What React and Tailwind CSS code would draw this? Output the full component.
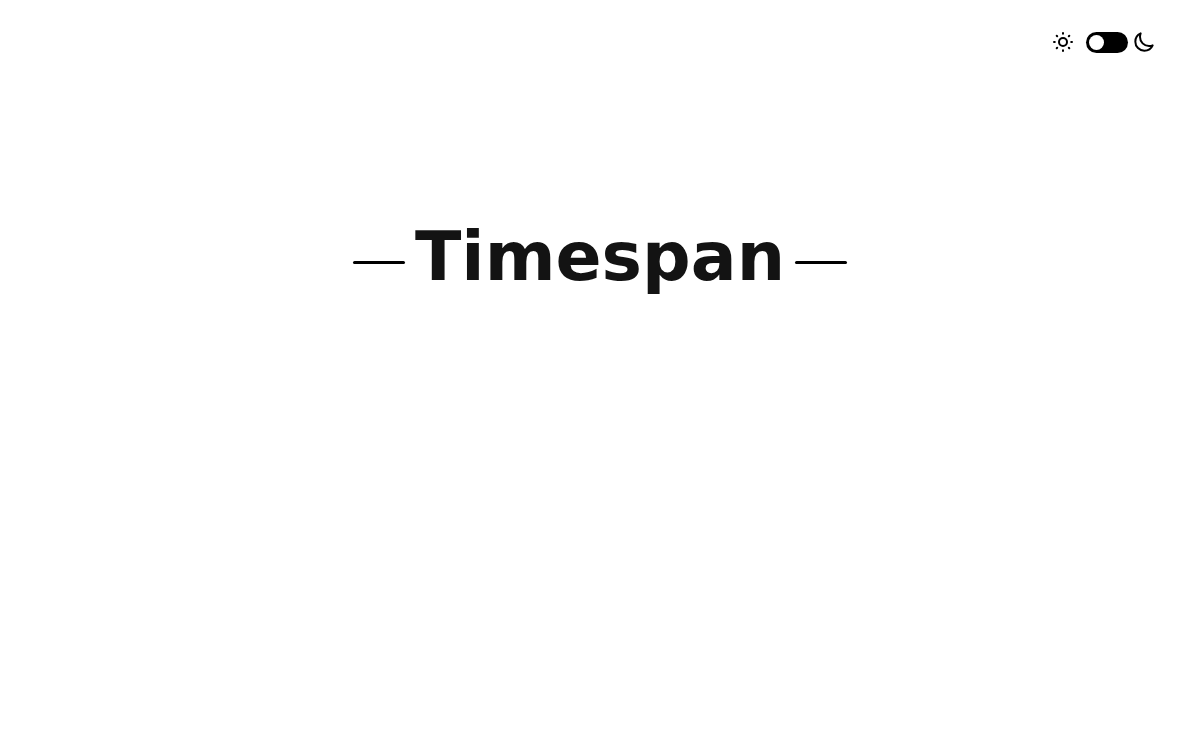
import React, { useState } from 'react';

function SunIcon() {
  return (
    <svg
      width="24"
      height="24"
      viewBox="0 0 24 24"
      fill="none"
      stroke="currentColor"
      strokeWidth="2"
      strokeLinecap="round"
      aria-hidden="true"
    >
      <circle cx="12" cy="12" r="4" />
      <path d="M12 3v.8M12 20.2v.8M3 12h.8M20.2 12h.8M5.7 5.7l.5.5M17.8 17.8l.5.5M5.7 18.3l.5-.5M17.8 6.2l.5-.5" />
    </svg>
  );
}

function MoonIcon() {
  return (
    <svg
      width="24"
      height="24"
      viewBox="-32 -32 576 576"
      fill="none"
      stroke="currentColor"
      strokeWidth="48"
      strokeLinecap="round"
      strokeLinejoin="round"
      aria-hidden="true"
    >
      <path d="M160 136c0-30.62 4.51-61.61 16-88C99.57 81.27 48 159.32 48 248c0 119.29 96.71 216 216 216 88.68 0 166.73-51.57 200-128-26.39 11.49-57.38 16-88 16-119.29 0-216-96.71-216-216z" />
    </svg>
  );
}

function ThemeSwitch({ dark, onChange }) {
  return (
    <div className="flex items-center">
      <SunIcon />
      <label className="relative ml-[11px] mr-1 block h-[21px] w-[42px] cursor-pointer">
        <input
          type="checkbox"
          aria-label="Dark mode"
          checked={dark}
          onChange={(e) => onChange(e.target.checked)}
          className="peer block h-full w-full cursor-pointer appearance-none rounded-full bg-black"
        />
        {/* Knob */}
        <span className="pointer-events-none absolute left-[3px] top-[3px] h-[15px] w-[15px] rounded-full bg-white transition-transform peer-checked:translate-x-[21px]"></span>
      </label>
      <MoonIcon />
    </div>
  );
}

function Dash() {
  return <span className="h-[3px] w-[52px] rounded-full bg-black"></span>;
}

export default function App() {
  const [dark, setDark] = useState(false);

  return (
    <div className="min-h-screen bg-white font-['DejaVu_Sans',sans-serif] text-black">
      <header className="flex h-[84px] items-center justify-end pr-11">
        <ThemeSwitch dark={dark} onChange={setDark} />
      </header>

      <main className="flex items-center justify-center gap-2 pt-[133px]">
        <Dash />
        <h1 className="w-[374px] pb-2.5 text-center text-[68px] font-bold leading-20 text-[#131313]">
          Timespan
        </h1>
        <Dash />
      </main>
    </div>
  );
}
